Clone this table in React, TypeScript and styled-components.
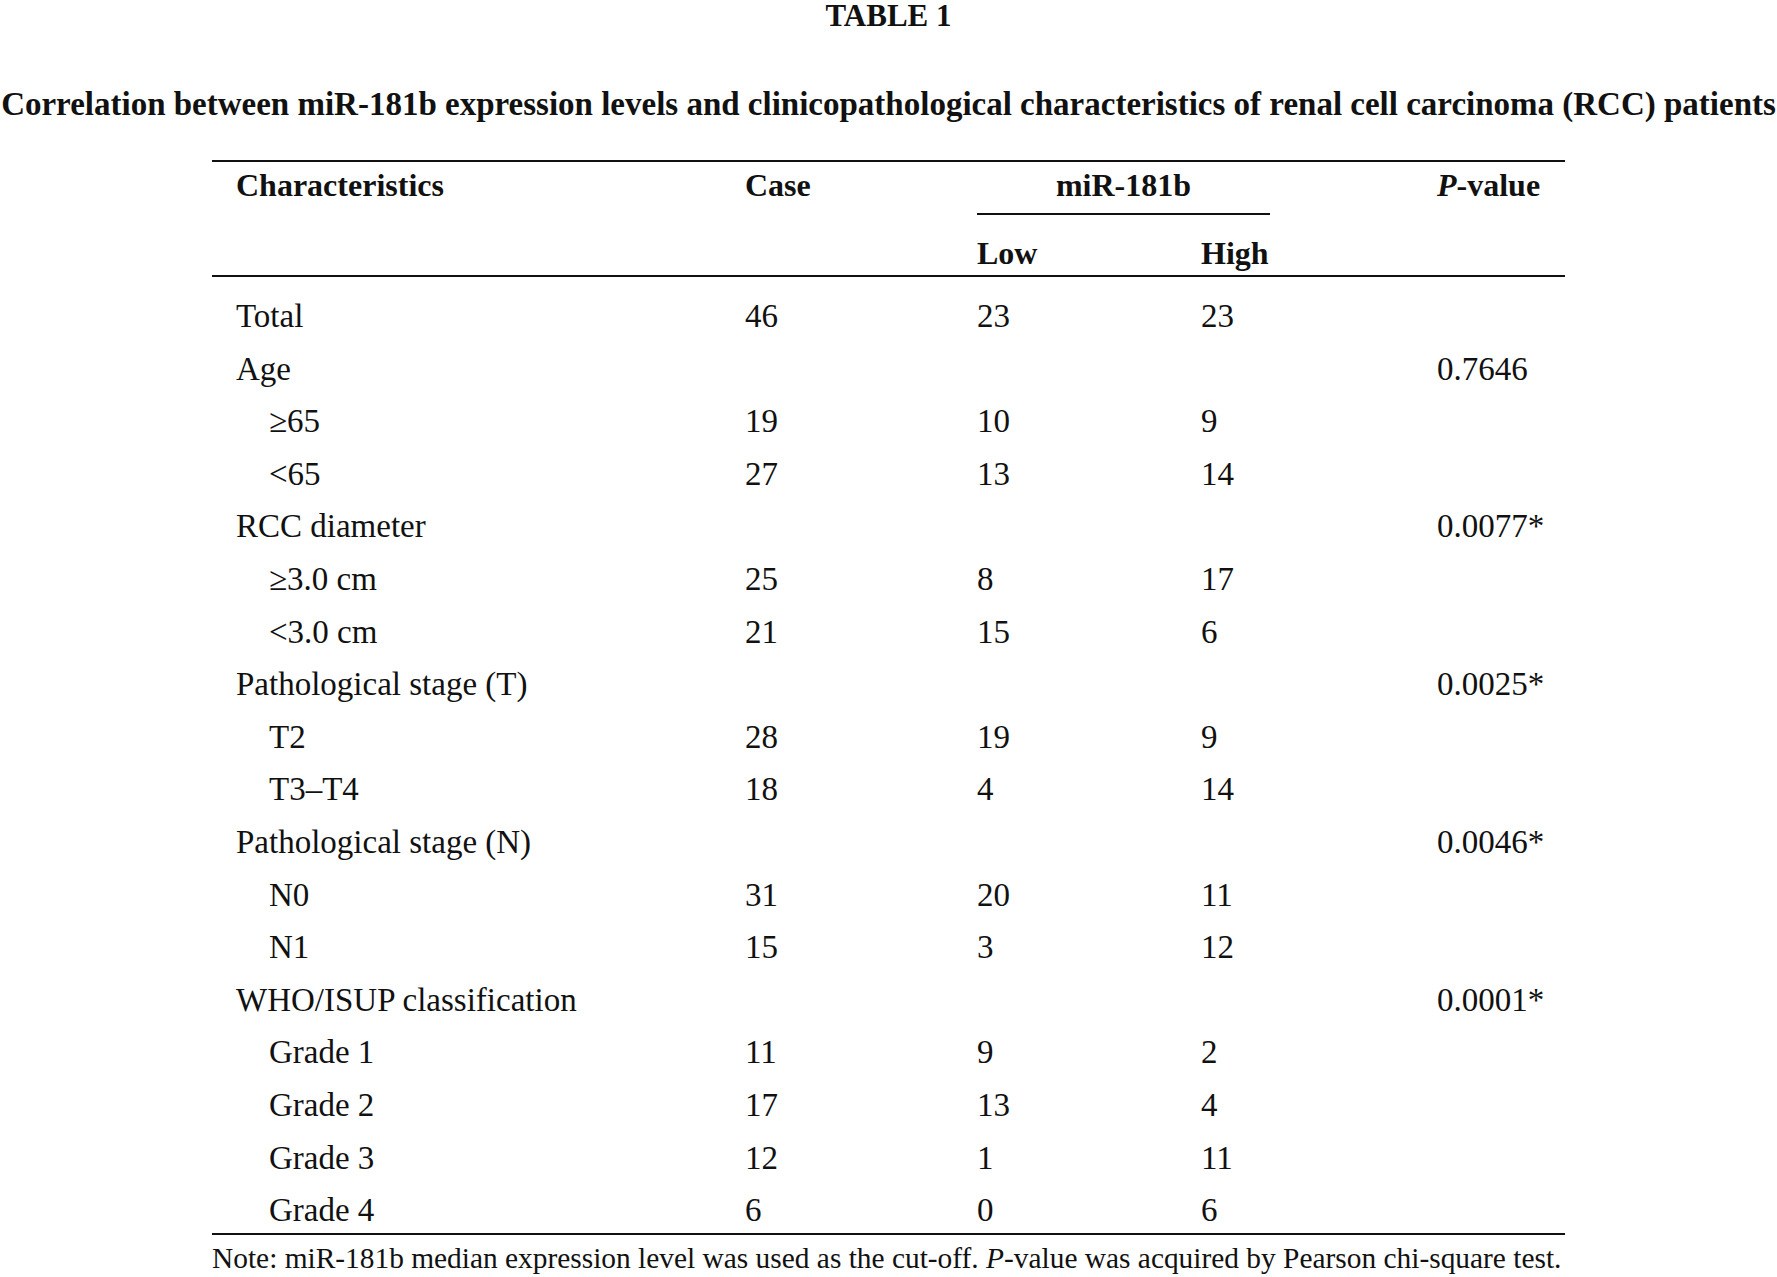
import React from 'react';
import styled, { createGlobalStyle } from 'styled-components';

const GlobalStyle = createGlobalStyle`
  html, body {
    margin: 0;
    padding: 0;
    background: #fff;
  }
  body {
    font-family: "Liberation Serif", "Times New Roman", serif;
    color: #111;
  }
`;

const Page = styled.div`
  width: 1777px;
  min-height: 1277px;
  box-sizing: border-box;
`;

const Label = styled.div`
  text-align: center;
  font-weight: bold;
  font-size: 31px;
  line-height: 32px;
`;

const Title = styled.div`
  margin-top: 56px;
  text-align: center;
  font-weight: bold;
  font-size: 33px;
  line-height: 32px;
  white-space: nowrap;
`;

const TableWrap = styled.div`
  width: 1353px;
  margin: 40px 0 0 212px;
`;

const Table = styled.table`
  width: 100%;
  table-layout: fixed;
  border-collapse: collapse;
  border-top: 2px solid #111;
  border-bottom: 2px solid #111;
  font-size: 33px;
  line-height: 32px;
`;

const Head = styled.thead`
  border-bottom: 2px solid #111;
`;

const Th = styled.th<{ $first?: boolean; $pad?: number }>`
  text-align: left;
  vertical-align: top;
  font-weight: bold;
  font-size: 32px;
  padding: ${p => p.$pad ?? 7}px 0 0 ${p => (p.$first ? 24 : 0)}px;
`;

const GroupHead = styled.div`
  width: 293px;
  text-align: center;
  padding-bottom: 12px;
  border-bottom: 2px solid #111;
`;

const Row = styled.tr`
  &:first-child td {
    padding-top: 23px;
  }
  &:last-child td {
    padding-bottom: 7px;
  }
`;

const Td = styled.td<{ $indent?: boolean; $first?: boolean }>`
  padding: 10.3px 0 10.3px ${p => (p.$first ? (p.$indent ? 57 : 24) : 0)}px;
  vertical-align: middle;
  white-space: nowrap;
`;

const Note = styled.div`
  margin-top: 8px;
  font-size: 29.4px;
  line-height: 30px;
  white-space: nowrap;
`;

type RowData = { label: string; indent?: boolean; cells: string[] };

const rows: RowData[] = [
  { label: 'Total', cells: ['46', '23', '23', ''] },
  { label: 'Age', cells: ['', '', '', '0.7646'] },
  { label: '≥65', indent: true, cells: ['19', '10', '9', ''] },
  { label: '<65', indent: true, cells: ['27', '13', '14', ''] },
  { label: 'RCC diameter', cells: ['', '', '', '0.0077*'] },
  { label: '≥3.0 cm', indent: true, cells: ['25', '8', '17', ''] },
  { label: '<3.0 cm', indent: true, cells: ['21', '15', '6', ''] },
  { label: 'Pathological stage (T)', cells: ['', '', '', '0.0025*'] },
  { label: 'T2', indent: true, cells: ['28', '19', '9', ''] },
  { label: 'T3–T4', indent: true, cells: ['18', '4', '14', ''] },
  { label: 'Pathological stage (N)', cells: ['', '', '', '0.0046*'] },
  { label: 'N0', indent: true, cells: ['31', '20', '11', ''] },
  { label: 'N1', indent: true, cells: ['15', '3', '12', ''] },
  { label: 'WHO/ISUP classification', cells: ['', '', '', '0.0001*'] },
  { label: 'Grade 1', indent: true, cells: ['11', '9', '2', ''] },
  { label: 'Grade 2', indent: true, cells: ['17', '13', '4', ''] },
  { label: 'Grade 3', indent: true, cells: ['12', '1', '11', ''] },
  { label: 'Grade 4', indent: true, cells: ['6', '0', '6', ''] },
];

const App = () => {
  return (
    <Page>
      <GlobalStyle />
      <Label>TABLE 1</Label>
      <Title>
        Correlation between miR-181b expression levels and clinicopathological characteristics of renal cell carcinoma (RCC) patients
      </Title>
      <TableWrap>
        <Table>
          <colgroup>
            <col style={{ width: 533 }} />
            <col style={{ width: 232 }} />
            <col style={{ width: 224 }} />
            <col style={{ width: 236 }} />
            <col style={{ width: 128 }} />
          </colgroup>
          <Head>
            <tr>
              <Th $first rowSpan={2}>Characteristics</Th>
              <Th rowSpan={2}>Case</Th>
              <Th colSpan={2}>
                <GroupHead>miR-181b</GroupHead>
              </Th>
              <Th rowSpan={2}>
                <i>P</i>-value
              </Th>
            </tr>
            <tr>
              <Th $pad={22} style={{ paddingBottom: 6 }}>Low</Th>
              <Th $pad={22} style={{ paddingBottom: 6 }}>High</Th>
            </tr>
          </Head>
          <tbody>
            {rows.map(r => (
              <Row key={r.label}>
                <Td $first $indent={r.indent}>{r.label}</Td>
                {r.cells.map((c, i) => (
                  <Td key={i}>{c}</Td>
                ))}
              </Row>
            ))}
          </tbody>
        </Table>
        <Note>
          Note: miR-181b median expression level was used as the cut-off. <i>P</i>-value was acquired by Pearson chi-square test.
        </Note>
      </TableWrap>
    </Page>
  );
};

export default App;
